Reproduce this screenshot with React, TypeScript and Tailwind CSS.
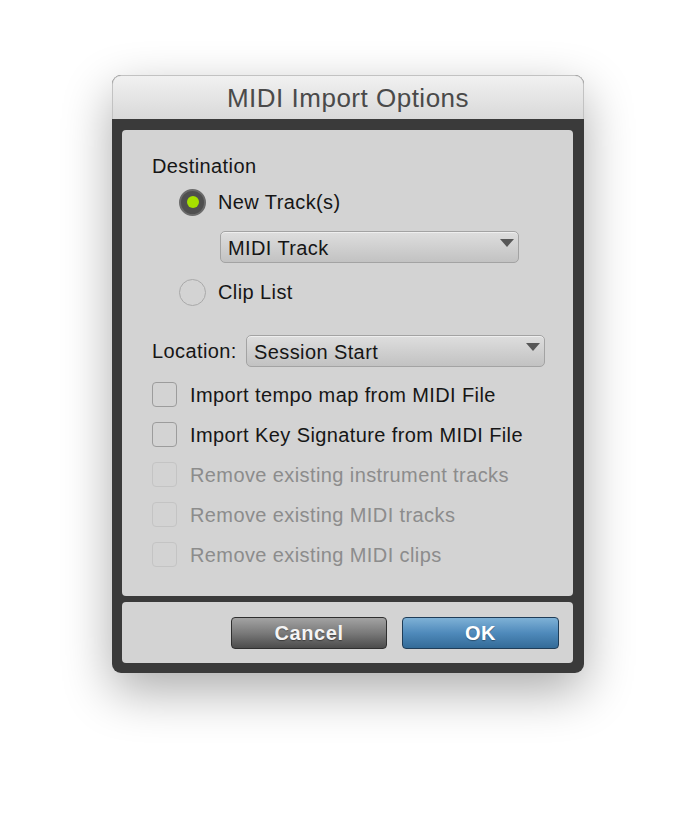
import type { ReactNode } from "react";

const FONT = "font-['Helvetica_Neue','Liberation_Sans',Arial,sans-serif]";
const TEXT = "text-[20px] leading-[24px] tracking-[0.4px]";

function Caret() {
  return (
    <svg width="14" height="8" viewBox="0 0 14 8" className="shrink-0">
      <polygon points="0,0 14,0 7,8" fill="#575757" />
    </svg>
  );
}

function Dropdown({ label, className }: { label: string; className: string }) {
  return (
    <div
      className={`flex h-[32px] items-start justify-between rounded-[5px] border border-[#a3a3a3] bg-gradient-to-b from-[#dedede] to-[#c2c2c2] pl-[7px] pr-[4px] shadow-[inset_0_1px_0_rgba(255,255,255,0.5)] ${className}`}
    >
      <span className={`pt-[4px] ${TEXT} text-[#161616]`}>{label}</span>
      <span className="pt-[7px]">
        <Caret />
      </span>
    </div>
  );
}

function Radio({ checked, children }: { checked?: boolean; children: ReactNode }) {
  return (
    <div className="flex h-[28px] items-center gap-[12px] pl-[27px]">
      {checked ? (
        <span className="flex h-[27px] w-[27px] items-center justify-center rounded-full border-2 border-[#6b6b6b] bg-[#4f4f4f]">
          <span className="h-[12px] w-[12px] rounded-full bg-[#a6e000]" />
        </span>
      ) : (
        <span className="h-[27px] w-[27px] rounded-full border-[1.5px] border-[#a9a9a9]" />
      )}
      <span className={`${TEXT} text-[#161616]`}>{children}</span>
    </div>
  );
}

function Check({ label, disabled }: { label: string; disabled?: boolean }) {
  return (
    <div className="flex h-[25px] items-center gap-[13px]">
      <span
        className={`h-[25px] w-[25px] rounded-[4px] border-[1.5px] ${disabled ? "border-[#c4c4c4]" : "border-[#9c9c9c]"}`}
      />
      <span className={`${TEXT} ${disabled ? "text-[#8c8c8c]" : "text-[#161616]"}`}>{label}</span>
    </div>
  );
}

export default function App() {
  return (
    <div className={`min-h-[822px] bg-white pt-[75px] ${FONT}`}>
      <div className="mx-auto w-[472px] rounded-[9px] bg-[#3a3a3a] shadow-[0_18px_50px_rgba(0,0,0,0.33)]">
        <div className="flex h-[44px] items-center justify-center rounded-t-[9px] border border-b-0 border-[#c2c2c2] bg-gradient-to-b from-[#f1f1f1] to-[#d9d9d9] text-[26px] leading-none tracking-[0.5px] text-[#4a4a4a]">
          MIDI Import Options
        </div>

        <div className="flex flex-col gap-[6px] pb-[10px] pl-[10px] pr-[11px] pt-[11px]">
          <div className="h-[466px] rounded-[4px] bg-[#d3d3d3] pl-[30px] pt-[24px]">
            <div className={`${TEXT} text-[#161616]`}>Destination</div>

            <div className="mt-[10px]">
              <Radio checked>New Track(s)</Radio>
            </div>

            <Dropdown label="MIDI Track" className="ml-[68px] mt-[15px] w-[299px]" />

            <div className="mt-[15px]">
              <Radio>Clip List</Radio>
            </div>

            <div className="mt-[29px] flex items-center">
              <span className={`w-[94px] ${TEXT} text-[#161616]`}>Location:</span>
              <Dropdown label="Session Start" className="w-[299px]" />
            </div>

            <div className="mt-[15px] flex flex-col gap-[15px]">
              <Check label="Import tempo map from MIDI File" />
              <Check label="Import Key Signature from MIDI File" />
              <Check label="Remove existing instrument tracks" disabled />
              <Check label="Remove existing MIDI tracks" disabled />
              <Check label="Remove existing MIDI clips" disabled />
            </div>
          </div>

          <div className="flex h-[61px] items-center justify-end gap-[15px] rounded-[4px] bg-[#d3d3d3] pr-[14px]">
            <button className="h-[32px] w-[156px] rounded-[4px] border border-[#2f2f2f] bg-gradient-to-b from-[#a3a3a3] via-[#7a7a7a] to-[#4c4c4c] text-[20px] font-bold tracking-[0.6px] text-[#f4f4f4] [text-shadow:0_1px_1px_rgba(0,0,0,0.4)]">
              Cancel
            </button>
            <button className="h-[32px] w-[157px] rounded-[4px] border border-[#1f3d58] bg-gradient-to-b from-[#7eb1d6] via-[#4f8abb] to-[#336b98] text-[20px] font-bold tracking-[0.6px] text-white [text-shadow:0_1px_1px_rgba(0,0,0,0.35)]">
              OK
            </button>
          </div>
        </div>
      </div>
    </div>
  );
}
